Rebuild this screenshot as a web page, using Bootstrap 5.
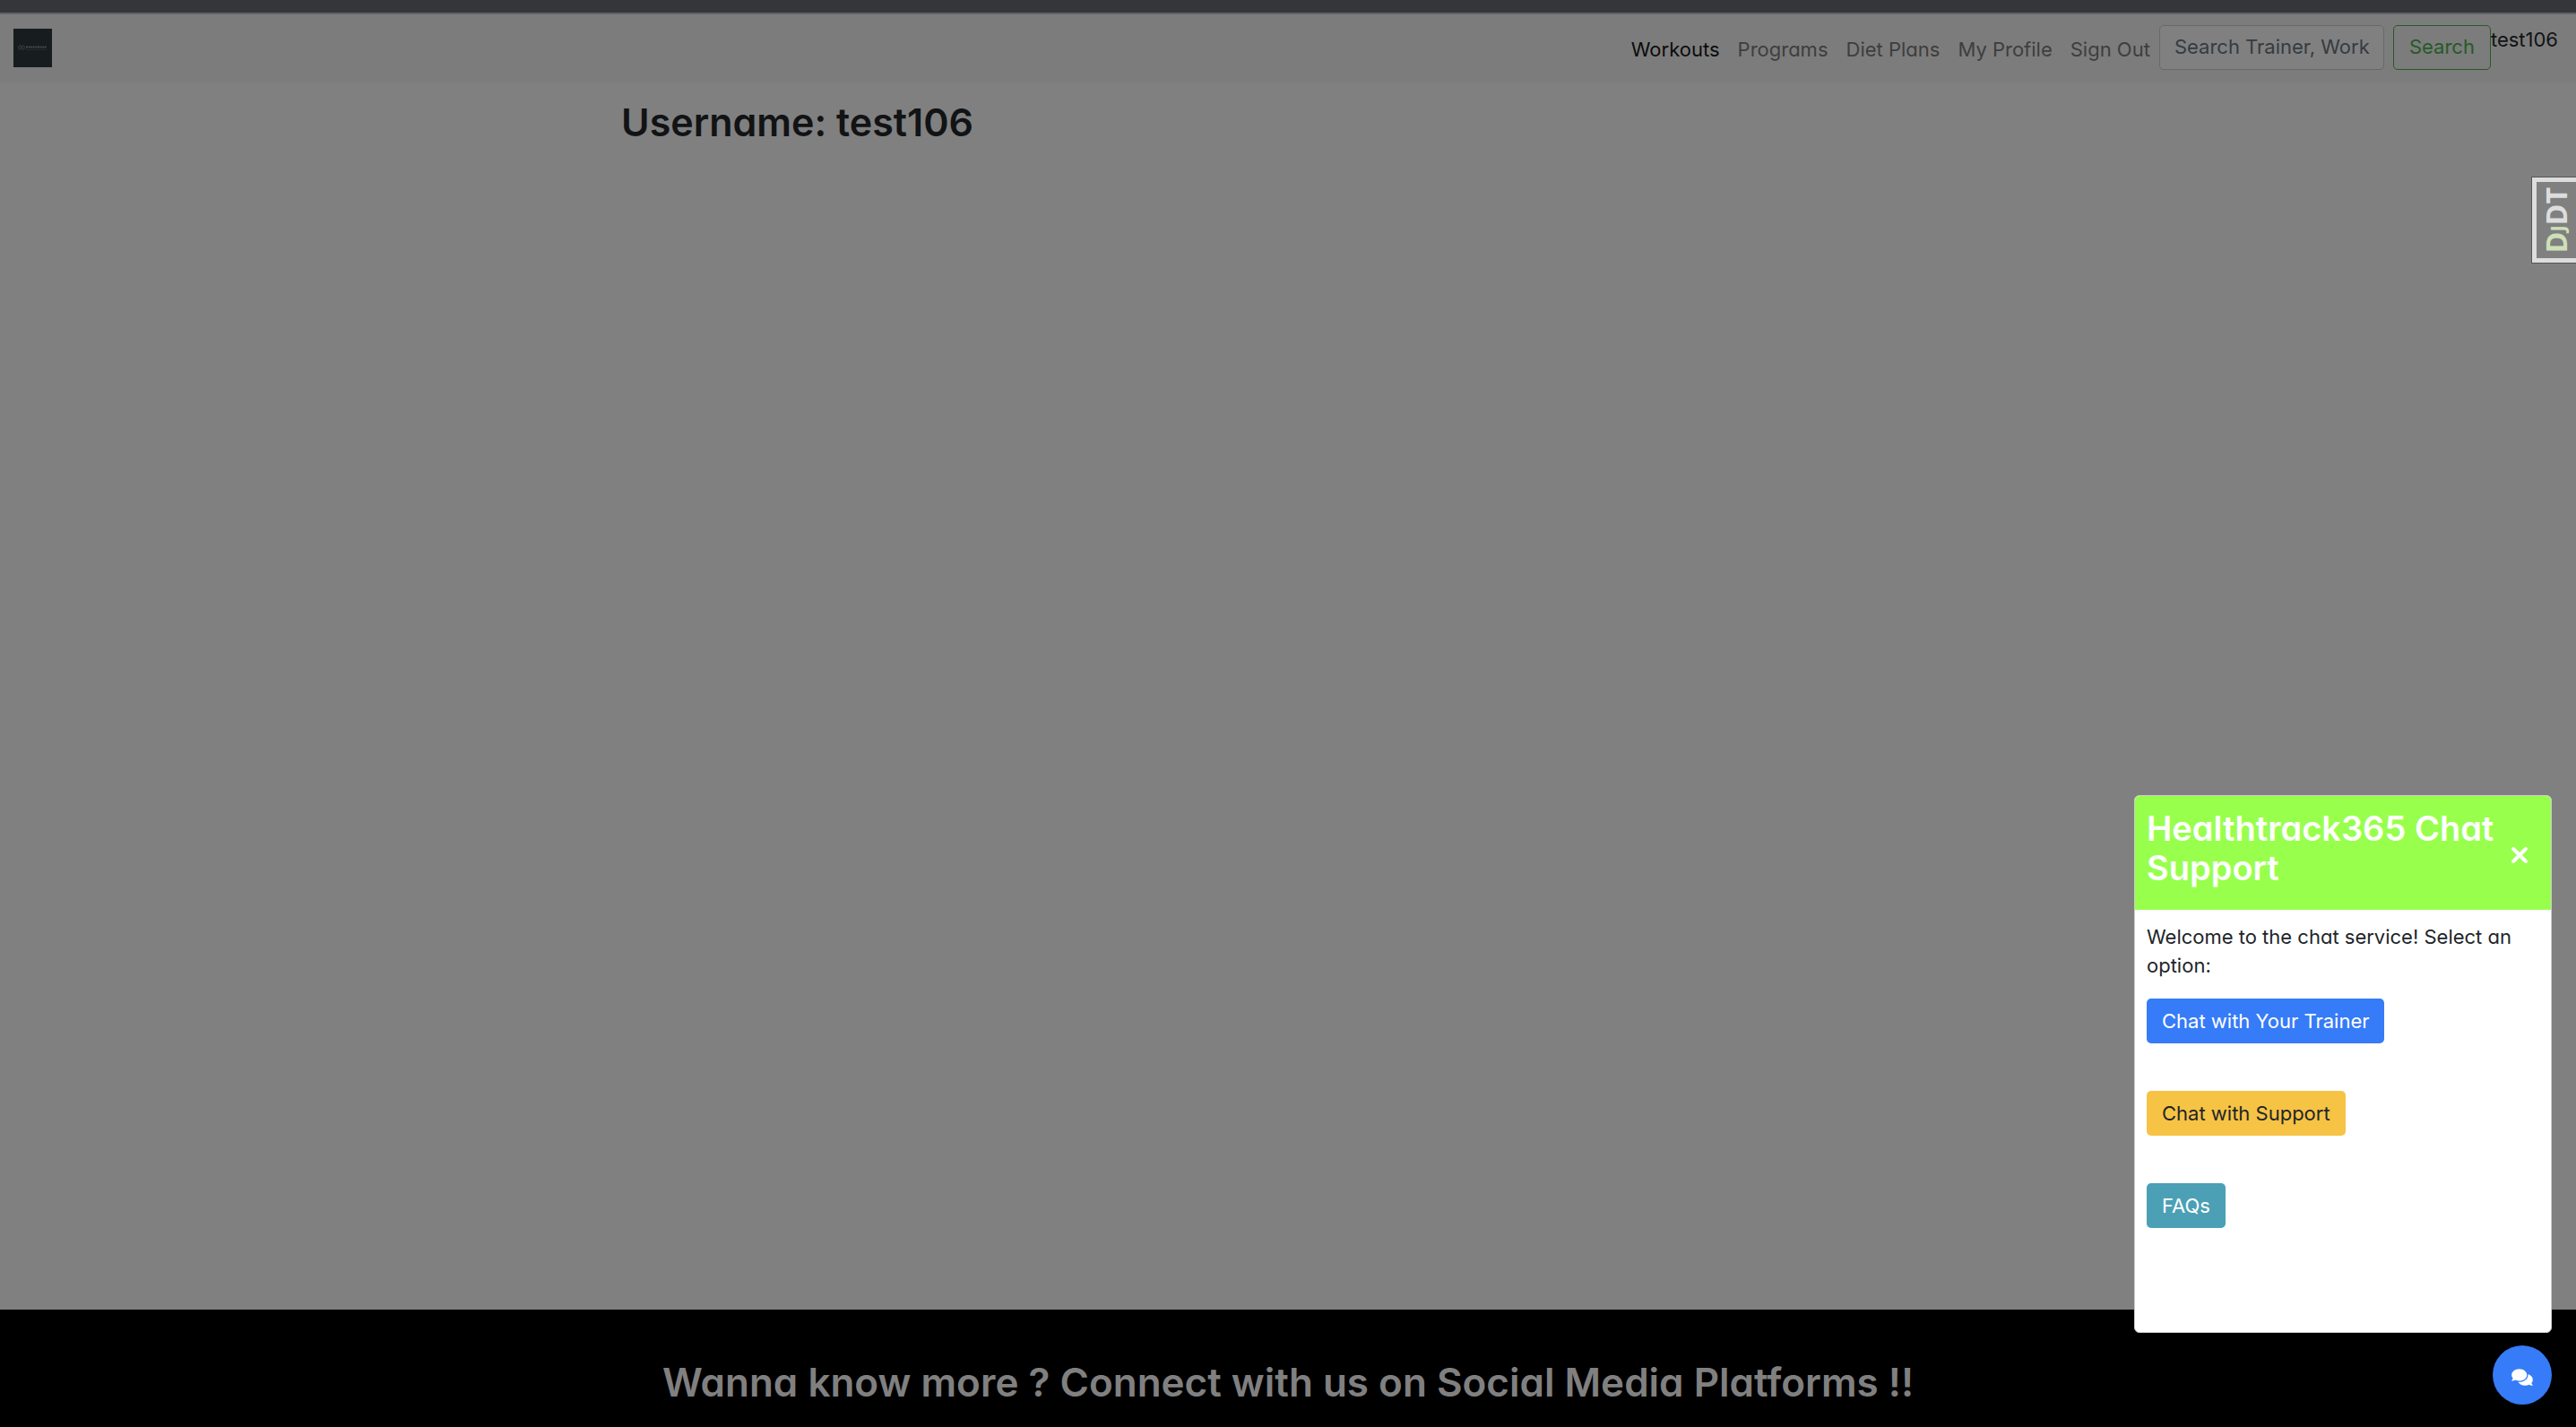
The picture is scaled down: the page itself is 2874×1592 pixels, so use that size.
<!DOCTYPE html>
<html lang="en">
<head>
<meta charset="utf-8">
<meta name="viewport" content="width=device-width, initial-scale=1">
<title>Healthtrack365</title>
<link rel="stylesheet" href="https://cdn.jsdelivr.net/npm/bootstrap@5.3.0/dist/css/bootstrap.min.css">
<style>
body{font-family:Inter,"Open Sans",sans-serif;font-feature-settings:"cv11";font-size:22px;line-height:32px;color:#111315;background:#808080;overflow-x:hidden}
.top-strip{height:16px;background:#35363a;border-bottom:2px solid #626367}
.site-nav{background:#7c7c7c;padding:12px 20px 14px 15px;height:76px}
.site-logo{display:block;width:43px;height:43px}
.site-nav .nav-link{padding:11px 10px;line-height:32px;color:#3e3e3e}
.site-nav .nav-link.active{color:#0c0c0c}
.site-nav .form-control,.site-nav .btn,.chat-box .btn{font-size:22px;line-height:32px;height:50px;border-radius:5px;padding:8px 17px}
.site-nav .form-control{width:251px;padding:7px 0 9px 16px;background:#808080;border-color:#67696b;color:#111315}
.site-nav .form-control::placeholder{color:#363b40;opacity:1}
.site-nav .btn{color:#255a28;border-color:#255a28;padding:7px 17px 9px;margin-left:10px}
.big-title{font-size:43px;line-height:51px;font-weight:600;margin:0}
.page-body{max-width:1528px;padding:19px 20px}
.site-foot{background:#000;color:#808080;padding:56px 20px 24px}
.site-foot .big-title{font-size:44px}
.debug-tab{position:fixed;right:0;top:198px;width:49px;height:95px;padding:0;border:5px solid #ddd;border-right:0;outline:1px solid #555;background:#808080;color:#ddd;font:700 32px/32px "Open Sans",sans-serif;text-decoration:none}
.debug-tab:hover{color:#fff}
.debug-text{writing-mode:vertical-rl;transform:rotate(180deg)}
.debug-green{color:#cfe0b8}
.debug-small{font-size:22px}
.chat-box{position:fixed;right:27px;bottom:105px;width:466px;height:600px;background:#fff;border:1px solid #ccc;border-radius:6px;overflow:hidden;color:#212529}
.chat-head{height:127px;padding:13px;background:#98ff4d;color:#fff}
.chat-title{font-size:38px;line-height:44px;font-weight:600;margin:0 0 11px}
.chat-close{width:44px;height:50px;padding:0;border:0;background:none;flex:none}
.chat-main{padding:14px 13px}
.chat-main p{margin:0 0 21px}
.chat-options{gap:53px}
.opt-blue,.opt-blue:hover{background:#367bf7;color:#fff}
.opt-gold,.opt-gold:hover{background:#f6c344;color:#212529}
.opt-teal,.opt-teal:hover{background:#4ba0b5;color:#fff}
.chat-toggle{position:fixed;right:27px;bottom:25px;width:66px;height:66px;border:0;background:#367bf7}
</style>
<script src="https://cdn.jsdelivr.net/npm/bootstrap@5.3.0/dist/js/bootstrap.bundle.min.js"></script>
</head>
<body class="d-flex flex-column min-vh-100">
<div class="top-strip"></div>
<header class="site-nav d-flex align-items-start">
  <a href="#" class="mt-1 me-auto" aria-label="Home">
    <svg class="site-logo" viewBox="0 0 43 43" aria-hidden="true">
      <rect width="43" height="43" fill="#171c1e"/>
      <path d="M7 18l4 6M11 18l-4 6M6 19v4M12 19v4" stroke="#3b3f40" fill="none"/>
      <path d="M14 20.500h23" stroke="#44484a" stroke-width="2" stroke-dasharray="2 .6"/>
      <path d="M14 23.500h23" stroke="#2d3233" stroke-dasharray="1.500 .8"/>
    </svg>
  </a>
  <nav class="nav">
    <a class="nav-link active" href="#" aria-current="page">Workouts</a>
    <a class="nav-link" href="#">Programs</a>
    <a class="nav-link" href="#">Diet Plans</a>
    <a class="nav-link" href="#">My Profile</a>
    <a class="nav-link" href="#">Sign Out</a>
  </nav>
  <form class="d-flex" role="search">
    <input class="form-control" type="text" placeholder="Search Trainer, Work" aria-label="Search">
    <button class="btn" type="button">Search</button>
  </form>
  <span>test106</span>
</header>
<main class="flex-grow-1">
  <div class="page-body mx-auto"><h1 class="big-title">Username: test106</h1></div>
</main>
<footer class="site-foot text-center"><h2 class="big-title">Wanna know more ? Connect with us on Social Media Platforms !!</h2></footer>

<a class="debug-tab d-flex align-items-center justify-content-center" href="#"><span class="debug-text"><span class="debug-green">D<span class="debug-small">J</span></span>DT</span></a>

<section class="chat-box">
  <div class="chat-head d-flex align-items-center justify-content-between">
    <h2 class="chat-title">Healthtrack365 Chat Support</h2>
    <button class="chat-close" type="button" aria-label="Close">
      <svg width="20" height="20" viewBox="0 0 20 20" aria-hidden="true"><path d="M3 3l14 14M17 3L3 17" stroke="#fff" stroke-width="4" stroke-linecap="round"/></svg>
    </button>
  </div>
  <div class="chat-main">
    <p>Welcome to the chat service! Select an option:</p>
    <div class="chat-options d-flex flex-column align-items-start">
      <button class="btn border-0 opt-blue" type="button">Chat with Your Trainer</button>
      <button class="btn border-0 opt-gold" type="button">Chat with Support</button>
      <button class="btn border-0 opt-teal" type="button">FAQs</button>
    </div>
  </div>
</section>
<button class="chat-toggle rounded-circle p-0" type="button" aria-label="Toggle chat">
  <svg width="24" height="21" viewBox="0 0 576 512" fill="#fff" aria-hidden="true"><path d="M416 192c0-88.400-93.100-160-208-160S0 103.600 0 192c0 34.300 14.100 65.900 38 92-13.400 30.200-35.500 54.200-35.800 54.500-2.200 2.300-2.800 5.700-1.500 8.700S4.800 352 8 352c36.600 0 66.900-12.300 88.700-25 32.200 15.700 70.300 25 111.300 25 114.900 0 208-71.600 208-160zm122 220c23.900-26 38-57.700 38-92 0-66.900-53.500-124.200-129.300-148.100.9 6.600 1.300 13.300 1.300 20.100 0 105.900-107.700 192-240 192-10.800 0-21.300-.8-31.700-1.900C207.800 439.600 281.800 480 368 480c41 0 79.100-9.200 111.300-25 21.800 12.700 52.100 25 88.700 25 3.200 0 6.100-1.900 7.300-4.800 1.300-2.900.7-6.300-1.500-8.700-.3-.3-22.400-24.200-35.800-54.500z"/></svg>
</button>
</body>
</html>
